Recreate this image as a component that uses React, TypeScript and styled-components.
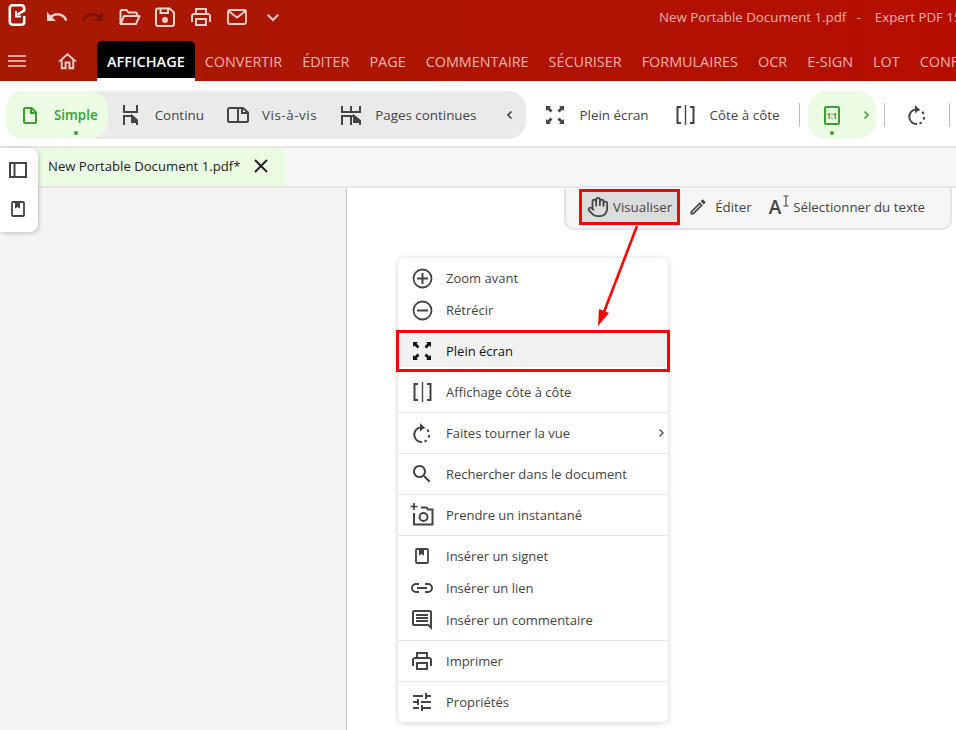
import React from 'react';
import styled, { createGlobalStyle } from 'styled-components';
import { Hand } from 'lucide-react';

const GlobalStyle = createGlobalStyle`
    html,
    body {
        margin: 0;
        padding: 0;
        background: #fff;
    }

    body {
        font-family: 'Open Sans', 'Noto Sans', sans-serif;
    }
`;

const Page = styled.div`
    position: relative;
    display: flex;
    flex-direction: column;
    width: 956px;
    height: 730px;
    overflow: hidden;
`;

const Header = styled.header`
    flex: none;
    height: 81px;
    background: linear-gradient(90deg, #a61a04 0%, #b60d02 100%);
`;

const TitleRow = styled.div`
    display: flex;
    align-items: center;
    height: 41px;
    padding-bottom: 7px;
    box-sizing: border-box;
    white-space: nowrap;
`;

const LogoSlot = styled.div`
    display: flex;
    align-items: center;
    justify-content: center;
    flex: none;
    width: 39px;
    margin: 0 3px 4px -3px;
`;

const QuickButton = styled.div<{ $off?: boolean }>`
    display: flex;
    align-items: center;
    justify-content: center;
    flex: none;
    width: 36px;
    color: ${(p) => (p.$off ? '#7c1006' : '#f6d0ca')};
`;

const WindowTitle = styled.div`
    flex: none;
    margin-left: 368px;
    font-size: 13.3px;
    color: #eeb0a8;
    white-space: pre;
`;

const TabRow = styled.nav`
    display: flex;
    align-items: flex-end;
    height: 40px;
    white-space: nowrap;
`;

const MenuButton = styled.div`
    display: flex;
    align-items: center;
    justify-content: center;
    flex: none;
    width: 34px;
    height: 40px;
    color: #f6d0ca;
`;

const HomeButton = styled(MenuButton)`
    width: 63px;
    box-sizing: border-box;
    padding-left: 3px;
`;

const Tab = styled.div<{ $active?: boolean }>`
    flex: none;
    box-sizing: border-box;
    height: ${(p) => (p.$active ? '40px' : '37px')};
    margin: ${(p) => (p.$active ? '0' : '0 0 3px')};
    padding: 2px 10px 0;
    line-height: 37px;
    font-size: ${(p) => (p.$active ? '14.5px' : '14.4px')};
    font-weight: ${(p) => (p.$active ? 600 : 400)};
    color: ${(p) => (p.$active ? '#fff' : '#efb5ac')};
    background: ${(p) => (p.$active ? '#000' : 'transparent')};
    border-bottom: ${(p) => (p.$active ? '3px solid #fff' : '0')};
    border-radius: 5px 5px 0 0;
`;

const Ribbon = styled.div`
    flex: none;
    display: flex;
    align-items: center;
    box-sizing: border-box;
    height: 67px;
    padding: 3px 0 0 6px;
    background: #fff;
    border-bottom: 2px solid #e8e8e8;
    white-space: nowrap;
`;

const RibbonPill = styled.div`
    display: flex;
    align-items: center;
    height: 48px;
    background: #eaeaea;
    border-radius: 18px;
`;

const RibbonItem = styled.div<{ $active?: boolean; $wide?: boolean }>`
    position: relative;
    display: flex;
    align-items: center;
    gap: 12px;
    height: 48px;
    padding: 0 11px;
    font-size: 13.4px;
    font-weight: ${(p) => (p.$active ? 600 : 500)};
    letter-spacing: ${(p) => (p.$wide ? '0.55px' : '0')};
    color: ${(p) => (p.$active ? '#3aa02b' : '#444')};
    background: ${(p) => (p.$active ? '#ebfbe4' : 'transparent')};
    border-radius: 18px;

    &:first-child {
        padding-left: 12px;
        padding-right: 10px;
    }
`;

const IconSlot = styled.span`
    display: flex;
    align-items: center;
    justify-content: center;
    flex: none;
    width: 24px;
`;

const ActiveDot = styled.span`
    position: absolute;
    left: 68px;
    bottom: 4px;
    width: 4px;
    height: 4px;
    background: #3aa02b;
    border-radius: 50%;
`;

const PillChevron = styled.span`
    display: flex;
    align-items: center;
    justify-content: center;
    width: 16px;
    margin-left: 15px;
    margin-right: 8px;
    color: #444;
`;

const PlainItems = styled.div`
    display: flex;
    align-items: center;
    gap: 4px;
    margin-left: 5px;
`;

const RibbonDivider = styled.span`
    flex: none;
    width: 1px;
    height: 24px;
    background: #bdbdbd;
    margin: 0 8px;
`;

const ZoomPill = styled.div`
    position: relative;
    display: flex;
    align-items: center;
    flex: none;
    width: 68px;
    height: 48px;
    padding-left: 16px;
    box-sizing: border-box;
    color: #3aa02b;
    background: #ebfbe4;
    border-radius: 18px;
`;

const ZoomChevron = styled.span`
    display: flex;
    margin-left: 21px;
`;

const ZoomDot = styled(ActiveDot)`
    left: 22px;
`;

const RatioBox = styled.span`
    display: flex;
    align-items: center;
    justify-content: center;
    box-sizing: border-box;
    width: 16px;
    height: 19px;
    font-size: 8px;
    font-weight: 700;
    letter-spacing: -0.5px;
    color: #3aa02b;
    border: 2px solid #3aa02b;
    border-radius: 2px;
`;

const RotateButton = styled.div`
    display: flex;
    align-items: center;
    justify-content: center;
    flex: none;
    width: 48px;
    color: #444;
`;

const TabStrip = styled.div`
    flex: none;
    display: flex;
    box-sizing: border-box;
    height: 40px;
    padding-left: 38px;
    background: #f7f7f7;
    border-bottom: 2px solid #e6e6e6;
`;

const DocTab = styled.div`
    display: flex;
    align-items: center;
    gap: 14px;
    width: 248px;
    box-sizing: border-box;
    padding: 0 0 2px 10px;
    font-size: 13.15px;
    color: #222;
    background: #ebfbe4;
`;

const SidePanel = styled.aside`
    position: absolute;
    left: 0;
    top: 148px;
    display: flex;
    flex-direction: column;
    align-items: center;
    gap: 23px;
    box-sizing: border-box;
    width: 38px;
    height: 84px;
    padding: 14px 2px 0 0;
    color: #444;
    background: #fff;
    border-radius: 0 8px 8px 0;
    box-shadow: 1px 1px 4px rgba(0, 0, 0, 0.22);
`;

const Main = styled.main`
    flex: 1;
    display: flex;
    min-height: 0;
`;

const LeftPane = styled.div`
    flex: none;
    width: 347px;
    box-sizing: border-box;
    background: #f3f3f3;
    border-right: 1px solid #c0c0c0;
`;

const DocPane = styled.div`
    position: relative;
    flex: 1;
    background: #fff;
`;

const FloatingBar = styled.div`
    display: flex;
    align-items: center;
    box-sizing: border-box;
    width: 388px;
    height: 42px;
    margin-left: 217px;
    padding: 0 0 3px 13px;
    font-size: 13.3px;
    color: #444;
    white-space: nowrap;
    background: #f6f6f6;
    border: 2px solid #e4e4e4;
    border-top: 0;
    border-radius: 0 0 10px 10px;
`;

const BarTool = styled.div<{ $marked?: boolean }>`
    display: flex;
    align-items: center;
    gap: ${(p) => (p.$marked ? '4px' : '7px')};
    box-sizing: border-box;
    height: 36px;
    padding: ${(p) => (p.$marked ? '0 5px' : '0 8px')};
    background: ${(p) => (p.$marked ? '#dcdcdc' : 'transparent')};
    border: ${(p) => (p.$marked ? '3px solid #f00' : '0')};
`;

const SelectGlyph = styled.span`
    display: flex;
    align-items: flex-start;
    gap: 2px;
    margin: 0 -3px 0 1px;
    font-size: 19px;
    line-height: 24px;
    font-weight: 600;
    color: #444;
`;

const ContextMenu = styled.div`
    position: absolute;
    left: 51px;
    top: 70px;
    box-sizing: border-box;
    width: 270px;
    padding: 4px 0;
    background: #fff;
    border-radius: 6px;
    box-shadow: 0 1px 6px rgba(0, 0, 0, 0.18);
`;

const MenuRow = styled.div<{ $marked?: boolean }>`
    position: relative;
    display: flex;
    align-items: center;
    gap: 12px;
    height: 32px;
    padding-left: 12px;
    font-size: 13px;
    color: ${(p) => (p.$marked ? '#111' : '#444')};
    background: ${(p) => (p.$marked ? '#f1f1f1' : 'transparent')};

    ${(p) =>
        p.$marked &&
        `&::after {
            content: '';
            position: absolute;
            inset: -5px -2px -5px -2px;
            border: 3px solid #f00;
        }`}
`;

const RowChevron = styled.span`
    position: absolute;
    right: 2px;
    top: 11px;
    display: flex;
    color: #666;
`;

const MenuSeparator = styled.div`
    height: 1px;
    margin: 4px 0;
    background: #e6e6e6;
`;

const ArrowLayer = styled.svg`
    position: absolute;
    left: 0;
    top: 0;
    pointer-events: none;
`;

type IconProps = { size?: number };

const Svg = ({ size = 24, children }: IconProps & { children: React.ReactNode }) => (
    <svg width={size} height={size} viewBox="0 0 24 24" fill="none" stroke="currentColor" strokeWidth={2}>
        {children}
    </svg>
);

const Filled = ({ size = 24, d, flip }: IconProps & { d: string; flip?: boolean }) => (
    <svg width={size} height={size} viewBox="0 0 24 24" fill="currentColor" style={flip ? { transform: 'scaleX(-1)' } : undefined}>
        <path d={d} />
    </svg>
);

const UNDO = 'M12.5 8c-2.65 0-5.05.99-6.9 2.6L2 7v9h9l-3.62-3.62c1.39-1.16 3.16-1.88 5.12-1.88 3.54 0 6.55 2.31 7.6 5.5l2.37-.78C21.08 11.03 17.15 8 12.5 8z';
const HOME = 'M12 5.69l5 4.5V18h-2v-6H9v6H7v-7.81l5-4.5M12 3L2 12h3v8h6v-6h2v6h6v-8h3L12 3z';
const SEARCH = 'M15.5 14h-.79l-.28-.27C15.41 12.59 16 11.11 16 9.5 16 5.91 13.09 3 9.5 3S3 5.91 3 9.5 5.91 16 9.5 16c1.61 0 3.09-.59 4.23-1.57l.27.28v.79l5 4.99L20.49 19l-4.99-5zm-6 0C7.01 14 5 11.99 5 9.5S7.01 5 9.5 5 14 7.01 14 9.5 11.99 14 9.5 14z';
const COMMENT = 'M21.99 4c0-1.1-.89-2-1.99-2H4c-1.1 0-2 .9-2 2v12c0 1.1.9 2 2 2h14l4 4-.01-18zM20 4v13.17L18.83 16H4V4h16zM6 12h12v2H6zm0-3h12v2H6zm0-3h12v2H6z';
const TUNE = 'M3 17v2h6v-2H3zM3 5v2h10V5H3zm10 16v-2h8v-2h-8v-2h-2v6h2zM7 9v2H3v2h4v2h2V9H7zm14 4v-2H11v2h10zm-6-4h2V7h4V5h-4V3h-2v6z';
const PENCIL = 'M3 17.25V21h3.75L17.81 9.94l-3.75-3.75L3 17.25zM5.92 19H5v-.92l9.06-9.06.92.92L5.92 19zM20.71 5.63l-2.34-2.34c-.2-.2-.45-.29-.71-.29s-.51.1-.7.29l-1.83 1.83 3.75 3.75 1.83-1.83c.39-.39.39-1.02 0-1.41z';
const PRINT = 'M19 8h-1V3H6v5H5c-1.66 0-3 1.34-3 3v6h4v4h12v-4h4v-6c0-1.66-1.34-3-3-3zM8 5h8v3H8V5zm8 14H8v-4h8v4zm2-2v-4H6v4H4v-6c0-.55.45-1 1-1h14c.55 0 1 .45 1 1v6h-2z';

const Logo = () => (
    <svg width={20} height={24} viewBox="0 0 20 24" fill="none" stroke="#fff" strokeWidth={2.6}>
        <path d="M17.2 13V18.7Q17.2 21.7 14.2 21.7H5.8Q2.8 21.7 2.8 18.7V5.3Q2.8 2.3 5.8 2.3H14.2Q17.2 2.3 17.2 5.3V7.5L10.5 11.5" />
        <path d="M9 8V13.5H14" strokeWidth={1.8} />
    </svg>
);

const FolderOpen = () => (
    <Svg size={24}>
        <path d="M3.5 19V6.5Q3.5 5 5 5H9.5L11.5 7.5H18.5Q20 7.5 20 9V10.5" />
        <path d="M3.5 19L7 11H22.5L19 19Z" strokeLinejoin="round" />
    </Svg>
);

const SaveDisk = () => (
    <Svg size={24}>
        <path d="M5 3.5H16.5L21 7.5V19Q21 21 19 21H5Q3 21 3 19V5.5Q3 3.5 5 3.5Z" />
        <path d="M7.5 3.5V8H15V3.5" />
        <circle cx="12" cy="15" r="2" fill="currentColor" />
    </Svg>
);

const Mail = () => (
    <svg width={20} height={16} viewBox="0 0 20 16" fill="none" stroke="currentColor" strokeWidth={1.8}>
        <rect x="1" y="1" width="18" height="14" rx="1.5" />
        <path d="M1.5 2L10 8.5L18.5 2" />
    </svg>
);

const ChevronDown = () => (
    <Svg size={18}>
        <path d="M5 9L12 16L19 9" strokeWidth={2.6} />
    </Svg>
);

const Burger = () => (
    <svg width={18} height={12} viewBox="0 0 18 12" fill="none" stroke="currentColor" strokeWidth={1.6}>
        <path d="M0 1H18M0 6H18M0 11H18" />
    </svg>
);

const SinglePage = () => (
    <svg width={14} height={17} viewBox="0 0 14 17" fill="none" stroke="currentColor" strokeWidth={2}>
        <path d="M1 2.5Q1 1 2.5 1H8.5L13 5.5V14.5Q13 16 11.5 16H2.5Q1 16 1 14.5Z" />
        <path d="M8 1V6H13" />
    </svg>
);

const ContinuousPage = () => (
    <svg width={15} height={20} viewBox="0 0 15 20" fill="none" stroke="#444" strokeWidth={2}>
        <path d="M1 0V7H14V0" />
        <path d="M1 20V11H9L14 15.5V20" />
        <path d="M9 11L14 15.5V17H9Z" fill="#444" />
    </svg>
);

const FacingPages = () => (
    <svg width={22} height={16} viewBox="0 0 22 16" fill="none" stroke="#444" strokeWidth={2}>
        <path d="M2.5 1H16L21 5.5V13.5Q21 15 19.5 15H2.5Q1 15 1 13.5V2.5Q1 1 2.5 1Z" />
        <path d="M11 1V15M15 1V6H21" />
    </svg>
);

const ContinuousSpread = () => (
    <svg width={20} height={19} viewBox="0 0 20 19" fill="none" stroke="#444" strokeWidth={2}>
        <path d="M1 0V6H19V0M10 0V6" />
        <path d="M1 19V10H13L19 15V19M10 10V19" />
        <path d="M13 10L19 15V16H13Z" fill="#444" />
    </svg>
);

const SmallChevron = ({ dir, size = 10, width = 1.6 }: { dir: 'left' | 'right'; size?: number; width?: number }) => (
    <svg width={size} height={size} viewBox="0 0 10 10" fill="none" stroke="currentColor" strokeWidth={width}>
        <path d={dir === 'left' ? 'M6.5 1.5L3 5L6.5 8.5' : 'M3.5 1.5L7 5L3.5 8.5'} />
    </svg>
);

const FullScreen = () => (
    <svg width={18} height={18} viewBox="0 0 18 18" fill="currentColor" stroke="none">
        <path d="M0 0H5L3.5 1.5L6.5 4.5L4.5 6.5L1.5 3.5L0 5Z" />
        <path d="M18 0H13L14.5 1.5L11.5 4.5L13.5 6.5L16.5 3.5L18 5Z" />
        <path d="M0 18H5L3.5 16.5L6.5 13.5L4.5 11.5L1.5 14.5L0 13Z" />
        <path d="M18 18H13L14.5 16.5L11.5 13.5L13.5 11.5L16.5 14.5L18 13Z" />
    </svg>
);

const SideBySide = () => (
    <svg width={19} height={20} viewBox="0 0 19 20" fill="none" stroke="currentColor" strokeWidth={2}>
        <path d="M5 2H1.5V18H5M14 2H17.5V18H14" />
        <path d="M9.5 0V20" strokeWidth={1.4} />
    </svg>
);

const RotateView = () => (
    <svg width={18} height={20} viewBox="0 0 18 20" fill="none" stroke="currentColor" strokeWidth={2}>
        <path d="M8 4.5A7 7 0 0 0 9 18.9" />
        <path d="M9 4.5A7 7 0 0 1 9 18.9" strokeDasharray="2.6 3.2" />
        <path d="M7 0L11.5 4.5L7 8.5Z" fill="currentColor" stroke="none" />
    </svg>
);

const Close = () => (
    <svg width={14} height={14} viewBox="0 0 14 14" fill="none" stroke="#222" strokeWidth={2}>
        <path d="M1 1L13 13M13 1L1 13" />
    </svg>
);

const PanelIcon = () => (
    <svg width={18} height={16} viewBox="0 0 18 16" fill="none" stroke="currentColor" strokeWidth={2}>
        <rect x="1" y="1" width="16" height="14" />
        <path d="M5.5 1V15" />
    </svg>
);

const BookMark = () => (
    <svg width={14} height={16} viewBox="0 0 14 16" fill="none" stroke="currentColor" strokeWidth={1.8}>
        <rect x="1" y="1" width="12" height="14" rx="1" />
        <path d="M4.5 1V7L6.5 5.5L8.5 7V1" fill="currentColor" strokeWidth={1} />
    </svg>
);

const CircleSign = ({ plus }: { plus?: boolean }) => (
    <svg width={21} height={21} viewBox="0 0 21 21" fill="none" stroke="currentColor" strokeWidth={1.8}>
        <circle cx="10.5" cy="10.5" r="9" />
        <path d="M5 10.5H16" strokeWidth={2} />
        {plus && <path d="M10.5 5V16" strokeWidth={2} />}
    </svg>
);

const Snapshot = () => (
    <svg width={24} height={24} viewBox="0 0 24 24" fill="none" stroke="currentColor" strokeWidth={2}>
        <path d="M4 10V21.5H22.5V6.5H18L16.5 4.5H11" />
        <circle cx="13.5" cy="14" r="4" />
        <path d="M4 0V7M0.5 3.5H7.5" strokeWidth={1.7} />
    </svg>
);

const LinkIcon = () => (
    <svg width={24} height={12} viewBox="0 0 24 12" fill="none" stroke="currentColor" strokeWidth={2}>
        <path d="M9 2H6A4 4 0 0 0 6 10H9M15 2H18A4 4 0 0 1 18 10H15M7 6H17" />
    </svg>
);

const IBeam = () => (
    <svg width={6} height={12} viewBox="0 0 6 12" fill="none" stroke="currentColor" strokeWidth={1.1}>
        <path d="M0.5 1H5.5M3 1V11M0.5 11H5.5" />
    </svg>
);

const Arrow = () => (
    <ArrowLayer width={956} height={730} viewBox="0 0 956 730">
        <path d="M637 226L604 312" stroke="#f00" strokeWidth={2.6} fill="none" />
        <path d="M598 326L599 309L609 313Z" fill="#f00" />
    </ArrowLayer>
);

const tabs = ['CONVERTIR', 'ÉDITER', 'PAGE', 'COMMENTAIRE', 'SÉCURISER', 'FORMULAIRES', 'OCR', 'E-SIGN', 'LOT', 'CONFORMITÉ'];

function App(): React.ReactElement {
    return (
        <Page>
            <GlobalStyle />
            <Header>
                <TitleRow>
                    <LogoSlot>
                        <Logo />
                    </LogoSlot>
                    <QuickButton><Filled size={24} d={UNDO} /></QuickButton>
                    <QuickButton $off><Filled size={24} d={UNDO} flip /></QuickButton>
                    <QuickButton><FolderOpen /></QuickButton>
                    <QuickButton><SaveDisk /></QuickButton>
                    <QuickButton><Filled size={24} d={PRINT} /></QuickButton>
                    <QuickButton><Mail /></QuickButton>
                    <QuickButton><ChevronDown /></QuickButton>
                    <WindowTitle>New Portable Document 1.pdf   -    Expert PDF 15</WindowTitle>
                </TitleRow>
                <TabRow>
                    <MenuButton><Burger /></MenuButton>
                    <HomeButton><Filled size={23} d={HOME} /></HomeButton>
                    <Tab $active>AFFICHAGE</Tab>
                    {tabs.map((t) => (
                        <Tab key={t}>{t}</Tab>
                    ))}
                </TabRow>
            </Header>

            <Ribbon>
                <RibbonPill>
                    <RibbonItem $active>
                        <IconSlot><SinglePage /></IconSlot>
                        Simple
                        <ActiveDot />
                    </RibbonItem>
                    <RibbonItem>
                        <IconSlot><ContinuousPage /></IconSlot>
                        Continu
                    </RibbonItem>
                    <RibbonItem $wide>
                        <IconSlot><FacingPages /></IconSlot>
                        Vis-à-vis
                    </RibbonItem>
                    <RibbonItem>
                        <IconSlot><ContinuousSpread /></IconSlot>
                        Pages continues
                    </RibbonItem>
                    <PillChevron><SmallChevron dir="left" /></PillChevron>
                </RibbonPill>
                <PlainItems>
                    <RibbonItem>
                        <IconSlot><FullScreen /></IconSlot>
                        Plein écran
                    </RibbonItem>
                    <RibbonItem>
                        <IconSlot><SideBySide /></IconSlot>
                        Côte à côte
                    </RibbonItem>
                </PlainItems>
                <RibbonDivider />
                <ZoomPill>
                    <RatioBox>1:1</RatioBox>
                    <ZoomChevron><SmallChevron dir="right" /></ZoomChevron>
                    <ZoomDot />
                </ZoomPill>
                <RibbonDivider />
                <RotateButton><RotateView /></RotateButton>
                <RibbonDivider />
            </Ribbon>

            <TabStrip>
                <DocTab>
                    New Portable Document 1.pdf*
                    <Close />
                </DocTab>
            </TabStrip>

            <Main>
                <LeftPane />
                <DocPane>
                    <FloatingBar>
                        <BarTool $marked>
                            <Hand size={22} strokeWidth={1.9} />
                            Visualiser
                        </BarTool>
                        <BarTool>
                            <Filled size={20} d={PENCIL} />
                            Éditer
                        </BarTool>
                        <BarTool>
                            <SelectGlyph>A<IBeam /></SelectGlyph>
                            Sélectionner du texte
                        </BarTool>
                    </FloatingBar>
                    <ContextMenu>
                        <MenuRow><IconSlot><CircleSign plus /></IconSlot>Zoom avant</MenuRow>
                        <MenuRow><IconSlot><CircleSign /></IconSlot>Rétrécir</MenuRow>
                        <MenuSeparator />
                        <MenuRow $marked><IconSlot><FullScreen /></IconSlot>Plein écran</MenuRow>
                        <MenuSeparator />
                        <MenuRow><IconSlot><SideBySide /></IconSlot>Affichage côte à côte</MenuRow>
                        <MenuSeparator />
                        <MenuRow>
                            <IconSlot><RotateView /></IconSlot>Faites tourner la vue
                            <RowChevron><SmallChevron dir="right" /></RowChevron>
                        </MenuRow>
                        <MenuSeparator />
                        <MenuRow><IconSlot><Filled size={24} d={SEARCH} /></IconSlot>Rechercher dans le document</MenuRow>
                        <MenuSeparator />
                        <MenuRow><IconSlot><Snapshot /></IconSlot>Prendre un instantané</MenuRow>
                        <MenuSeparator />
                        <MenuRow><IconSlot><BookMark /></IconSlot>Insérer un signet</MenuRow>
                        <MenuRow><IconSlot><LinkIcon /></IconSlot>Insérer un lien</MenuRow>
                        <MenuRow><IconSlot><Filled size={24} d={COMMENT} /></IconSlot>Insérer un commentaire</MenuRow>
                        <MenuSeparator />
                        <MenuRow><IconSlot><Filled size={24} d={PRINT} /></IconSlot>Imprimer</MenuRow>
                        <MenuSeparator />
                        <MenuRow><IconSlot><Filled size={24} d={TUNE} /></IconSlot>Propriétés</MenuRow>
                    </ContextMenu>
                </DocPane>
            </Main>

            <SidePanel>
                <PanelIcon />
                <BookMark />
            </SidePanel>
            <Arrow />
        </Page>
    );
}

export default App;
